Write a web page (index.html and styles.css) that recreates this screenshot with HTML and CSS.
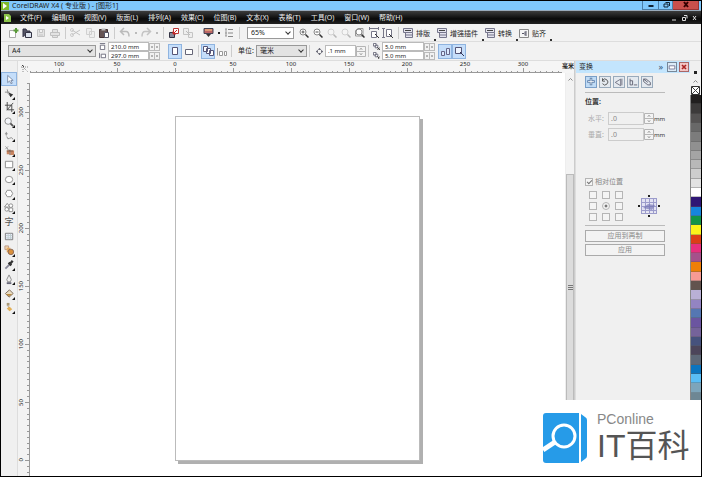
FILE: index.html
```html
<!DOCTYPE html>
<html lang="zh-CN">
<head>
<meta charset="utf-8">
<title>CorelDRAW X4</title>
<link rel="stylesheet" href="styles.css">
</head>
<body>
<svg class="defs" aria-hidden="true">
  <symbol id="ticks-h" viewBox="0 0 58 12"><path d="M.5 10v2M6.5 10v2M12.5 10v2M17.5 10v2M23.5 10v2M29.5 7v5M35.5 10v2M41.5 10v2M46.5 10v2M52.5 10v2M0 11.5h58" stroke="#999" fill="none"/></symbol>
  <symbol id="ticks-v" viewBox="0 0 12 58"><path d="M9 .5h3M9 6.5h3M9 12.5h3M9 17.5h3M9 23.5h3M7 29.5h5M9 35.5h3M9 41.5h3M9 46.5h3M9 52.5h3M11.5 0v58" stroke="#999" fill="none"/></symbol>
  <symbol id="zoom" viewBox="0 0 12 12"><circle cx="5" cy="5" r="3" fill="#fff" stroke="#888"/><path d="M7.5 7.5l3 3" stroke="#333" stroke-width="1.5"/></symbol>
  <symbol id="plugin" viewBox="0 0 12 12"><path d="M1.500 1.500h9v4h-9zM3.500 5.500v5h7v-5M3.500 8h7" fill="#e4e4ee" stroke="#77778c"/><path d="M3 3.500h6" stroke="#444"/></symbol>
  <symbol id="spin" viewBox="0 0 11 8"><path d="M.5 0v8M5.500 0v8M10.500 0v8M0 .5h11M0 7.500h11" stroke="#bbb" fill="none"/><path d="M2 4h2M7 4h2" stroke="#777"/></symbol>
  <symbol id="spin-tall" viewBox="0 0 10 11"><path d="M.5.5h9v10h-9zM.5 5.500h9" stroke="#b5b5b5" fill="#f4f4f4"/><path d="M4 3.500l1-1 1 1M4 7.500l1 1 1-1" stroke="#666" fill="none"/></symbol>
</svg>
<div class="app">
  <header class="titlebar">
    <svg class="logo" viewBox="0 0 8 8"><path d="M0 0h8v8H0z" fill="#7fba2c"/><path d="M2 1l4 3-4 3z" fill="#fff"/></svg>
    <h1>CorelDRAW X4 ( 专业版 ) - [图形1]</h1>
    <div class="winbuttons">
      <button aria-label="最小化"><svg viewBox="0 0 12 8"><path d="M3.500 5h5" stroke="#123" stroke-width="2"/></svg></button>
      <button aria-label="还原"><svg viewBox="0 0 12 8"><path d="M4 3h4v3H4zM5.500 1.500H9.500V5" fill="none" stroke="#123"/></svg></button>
      <button class="close" aria-label="关闭"><svg viewBox="0 0 12 8"><path d="M4 1l4 5M8 1L4 6" stroke="#300" stroke-width="2"/></svg></button>
    </div>
  </header>
  <nav class="menubar">
    <svg class="logo" viewBox="0 0 8 8"><path d="M1 0h5l2 2v6H1z" fill="#8bc34a"/><path d="M3 2l3 2-3 2z" fill="#fff"/></svg>
    <ul>
      <li><a href="#">文件(F)</a></li><li><a href="#">编辑(E)</a></li><li><a href="#">视图(V)</a></li><li><a href="#">版面(L)</a></li><li><a href="#">排列(A)</a></li><li><a href="#">效果(C)</a></li><li><a href="#">位图(B)</a></li><li><a href="#">文本(X)</a></li><li><a href="#">表格(T)</a></li><li><a href="#">工具(O)</a></li><li><a href="#">窗口(W)</a></li><li><a href="#">帮助(H)</a></li>
    </ul>
    <svg class="docbuttons" viewBox="0 0 28 8"><path d="M2 6h4M12.500 3.500h3v3h-3zM14 1.500h3v3M23 2l3 4M26 2l-3 4" fill="none" stroke="#ddd"/></svg>
  </nav>

  <div class="toolbar">
    <button class="ic" aria-label="新建"><svg viewBox="0 0 12 12"><path d="M2.500 3.500h6v7h-6z" fill="#fff" stroke="#aaa"/><path d="M9 1v5M6.500 3.500h5" stroke="#5a9a3a" stroke-width="2"/></svg></button>
    <button class="ic" aria-label="打开"><svg viewBox="0 0 12 12"><path d="M2 10V2h3l1 2h3v2" fill="#556" stroke="#334"/><path d="M4.500 5.500h6v5h-6z" fill="#dde3ee" stroke="#334"/></svg></button>
    <button class="ic" aria-label="保存"><svg viewBox="0 0 12 12"><path d="M2.500 2.500h7v7h-7zM4.500 2.500v3h3v-3M4 8h4" fill="#e3e3e3" stroke="#c4c4c4"/></svg></button>
    <button class="ic" aria-label="打印"><svg viewBox="0 0 12 12"><path d="M1.500 5.500h9v3h-9zM3.500 5V2.500h5V5M3.500 9v1.500h5V9" fill="#e3e3e3" stroke="#c0c0c0"/></svg></button>
    <i class="sep"></i>
    <button class="ic" aria-label="剪切"><svg viewBox="0 0 12 12"><path d="M2 3l8 5M2 8l8-5" stroke="#c4c4c4"/><circle cx="2" cy="3" r="1.500" fill="none" stroke="#ccc"/><circle cx="2" cy="8" r="1.500" fill="none" stroke="#ccc"/></svg></button>
    <button class="ic" aria-label="复制"><svg viewBox="0 0 12 12"><path d="M2.500 1.500h5v6h-5zM5.500 4.500h5v6h-5z" fill="#eee" stroke="#d0d0d0"/></svg></button>
    <button class="ic" aria-label="粘贴"><svg viewBox="0 0 12 12"><path d="M1.500 2.500h8v8h-8z" fill="#655" stroke="#433"/><path d="M3.500 1.500h4v2h-4z" fill="#bbb"/><path d="M6.500 5.500h4v5h-4z" fill="#fff" stroke="#556"/></svg></button>
    <i class="sep"></i>
    <button class="ic" aria-label="撤消"><svg viewBox="0 0 12 12"><path d="M5 1L1.500 4.500 5 8M2 4.500h5q3 0 3 5" fill="none" stroke="#bbb" stroke-width="1.500"/></svg></button><i class="dot muted"></i>
    <button class="ic" aria-label="重做"><svg viewBox="0 0 12 12"><path d="M7 1l3.500 3.500L7 8M10 4.500H5q-3 0-3 5" fill="none" stroke="#c4c4c4" stroke-width="1.500"/></svg></button><i class="dot muted"></i>
    <i class="sep"></i>
    <button class="ic" aria-label="导入"><svg viewBox="0 0 12 12"><path d="M1.500 5.500h5v5h-5z" fill="#889" stroke="#334"/><path d="M5.500 1.500h5v5h-5z" fill="#fff" stroke="#b33"/><path d="M9 3L5 7M5 4.500V7h3" stroke="#c22" fill="none"/></svg></button>
    <button class="ic" aria-label="导出"><svg viewBox="0 0 12 12"><path d="M1.500 1.500h5v6h-5zM6.500 5.500h4v5h-4z" fill="#eee" stroke="#c4c4c4"/><path d="M4 4l4 4" stroke="#bbb"/></svg></button>
    <i class="gap"></i>
    <button class="ic" aria-label="启动器"><svg viewBox="0 0 12 12"><path d="M2 1.500h9v5H2z" fill="#b66" stroke="#445"/><path d="M3 3h7" stroke="#fc8"/><path d="M4 7h5L6.500 10z" fill="#333"/></svg></button><i class="dot"></i>
    <button class="ic" aria-label="选项"><svg viewBox="0 0 12 12"><path d="M5 2.500h5M5 6h5M5 9.500h5" stroke="#888"/><path d="M2 2h2M2 6h2M2 9h2M3 2v7" stroke="#999"/></svg></button>
    <i class="sep"></i>
    <label class="combo zoombox"><select aria-label="缩放级别"><option>65%</option></select></label>
    <button class="ic" aria-label="放大"><svg viewBox="0 0 12 12"><use href="#zoom"/><path d="M3.500 5h3M5 3.500v3" stroke="#555"/></svg></button>
    <button class="ic" aria-label="缩小"><svg viewBox="0 0 12 12"><use href="#zoom"/><path d="M3.500 5h3" stroke="#555"/></svg></button>
    <button class="ic off" aria-label="缩放选定范围"><svg viewBox="0 0 12 12"><use href="#zoom"/></svg></button>
    <button class="ic off" aria-label="缩放全部对象"><svg viewBox="0 0 12 12"><use href="#zoom"/></svg></button>
    <button class="ic" aria-label="显示页面"><svg viewBox="0 0 12 12"><path d="M1.500 9V3.500L4 1.500h5V9z" fill="#fff" stroke="#999"/><use href="#zoom"/></svg></button>
    <button class="ic" aria-label="按页宽显示"><svg viewBox="0 0 12 12"><path d="M1 1.500h10M1.500 0v3M10.500 0v3M3.500 4.500h5v6h-5z" fill="#fff" stroke="#778"/><path d="M7 7l4 4" stroke="#333"/></svg></button>
    <button class="ic" aria-label="按页高显示"><svg viewBox="0 0 12 12"><path d="M1.500 1v10M0 1.500h3M0 10.500h3M4.500 2.500h5v7h-5z" fill="#fff" stroke="#778"/><path d="M7 7l4 4" stroke="#333"/></svg></button>
    <i class="sep"></i>
    <button class="plug"><svg viewBox="0 0 12 12"><use href="#plugin"/></svg>排版</button>
    <button class="plug"><svg viewBox="0 0 12 12"><use href="#plugin"/></svg>增强插件</button>
    <button class="plug"><svg viewBox="0 0 12 12"><use href="#plugin"/></svg>转换</button>
    <button class="plug"><svg viewBox="0 0 12 12"><path d="M1.500 2.500h9v8h-9z" fill="#f6f6f6" stroke="#888"/><path d="M8 4v5M7 4.500v4M4 6.500h2" stroke="#556" fill="none"/></svg>贴齐</button>
  </div>

  <div class="toolbar props">
    <label class="combo paper"><select aria-label="纸张类型"><option>A4</option></select></label>
    <div class="pair size">
      <label class="num"><svg viewBox="0 0 8 8"><path d="M1.500 2.500h5v5h-5zM1 .5h6" fill="#fff" stroke="#667"/></svg><input value="210.0 mm" aria-label="页宽"><svg class="spin"><use href="#spin"/></svg></label>
      <label class="num"><svg viewBox="0 0 8 8"><path d="M.5 1v6M2.500 2.500h5v4h-5z" fill="#fff" stroke="#667"/></svg><input value="297.0 mm" aria-label="页高"><svg class="spin"><use href="#spin"/></svg></label>
    </div>
    <div class="group">
      <button class="tog on" aria-label="纵向"><svg viewBox="0 0 12 12"><path d="M3.500 2.500h5v7h-5z" fill="#fff" stroke="#557"/></svg></button>
      <button class="tog" aria-label="横向"><svg viewBox="0 0 12 12"><path d="M2.500 4.500h7v5h-7z" fill="#fff" stroke="#667"/></svg></button>
    </div>
    <i class="sep"></i>
    <div class="group">
      <button class="tog on" aria-label="所有页面"><svg viewBox="0 0 12 12"><path d="M1.500 1.500h4v5h-4zM4.500 3.500h4v5h-4zM7.500 5.500h4v5h-4z" fill="#fff" stroke="#557"/></svg></button>
      <button class="tog" aria-label="当前页面"><svg viewBox="0 0 12 12"><path d="M1.500 3v7.500M3.500 6.500h3v4h-3zM8.500 6.500h2v4h-2z" fill="#fff" stroke="#999"/></svg></button>
    </div>
    <i class="sep"></i>
    <label class="unit">单位: <span class="combo"><select><option>毫米</option></select></span></label>
    <i class="sep"></i>
    <label class="num nudge"><svg viewBox="0 0 8 8"><path d="M4 0l2 2H2zM4 8l2-2H2zM0 4l2-2v4zM8 4L6 2v4z" fill="#445"/></svg><input value=".1 mm" aria-label="微调偏移"><svg class="spin-tall"><use href="#spin-tall"/></svg></label>
    <i class="sep"></i>
    <div class="pair dup">
      <label class="num"><svg viewBox="0 0 8 8"><path d="M.5.500h3v3h-3zM2.500 2.500h3v3h-3z" fill="#fff" stroke="#667"/><path d="M5 5l3 3M8 5L5 8" stroke="#333"/></svg><input value="5.0 mm" aria-label="再制距离 X"><svg class="spin"><use href="#spin"/></svg></label>
      <label class="num"><svg viewBox="0 0 8 8"><path d="M.5.500h3v3h-3zM2.500 2.500h3v3h-3z" fill="#fff" stroke="#667"/><path d="M5 5l1.500 1.500L8 5M6.500 6v2" stroke="#333" fill="none"/></svg><input value="5.0 mm" aria-label="再制距离 Y"><svg class="spin"><use href="#spin"/></svg></label>
    </div>
    <div class="group">
      <button class="tog on" aria-label="绘制时显示"><svg viewBox="0 0 12 12"><path d="M2.500 6.500h3v4h-3zM7.500 3.500h3v6h-3z" fill="#dceaff" stroke="#668"/></svg></button>
      <button class="tog on" aria-label="移动时显示"><svg viewBox="0 0 12 12"><path d="M2.500 2.500h6v6h-6z" fill="#eef5ff" stroke="#557"/><path d="M7 7l4 4" stroke="#335"/></svg></button>
    </div>
  </div>

  <div class="work">
    <ul class="toolbox">
      <li><button class="on" aria-label="挑选"><svg viewBox="0 0 12 12"><path d="M4 1.500v8l2-2 1.500 3L9 10 7.500 7h2.500z" fill="#fff" stroke="#7a8aa5"/></svg></button></li>
      <li class="fly"><button aria-label="形状"><svg viewBox="0 0 12 12"><path d="M1 4.500h5M3.500 1.500q0 5 4 8" stroke="#888" fill="none"/><path d="M5 5l5 2-3 3z" fill="#333"/></svg></button></li>
      <li class="fly"><button aria-label="裁剪"><svg viewBox="0 0 12 12"><path d="M3.500 0v8.500H11M1 3.500h7.500V11M10 1L3 9" stroke="#444" fill="none"/></svg></button></li>
      <li class="fly"><button aria-label="缩放"><svg viewBox="0 0 12 12"><circle cx="4.500" cy="4.500" r="3.500" fill="#f4f6fa" stroke="#888"/><path d="M7 7l3 3" stroke="#555" stroke-width="2"/></svg></button></li>
      <li class="fly"><button aria-label="手绘"><svg viewBox="0 0 12 12"><path d="M2.500 1v4M1 3h3M3 6q1 4 3 2t4 1" stroke="#888" fill="none"/></svg></button></li>
      <li class="fly"><button aria-label="智能填充"><svg viewBox="0 0 12 12"><path d="M1.500 1.500l3 3M4.500 1.500l-3 3M3 4l4 3" stroke="#999" fill="none"/><path d="M3 6h3v4H3zM7 6h4v5H7z" fill="#c98560"/><path d="M3 6.500h7M6.500 5v6" stroke="#754"/></svg></button></li>
      <li class="fly"><button aria-label="矩形"><svg viewBox="0 0 12 12"><path d="M1.500 2.500h8v7h-8z" fill="#fff" stroke="#888"/></svg></button></li>
      <li class="fly"><button aria-label="椭圆形"><svg viewBox="0 0 12 12"><ellipse cx="5.500" cy="6" rx="4" ry="3.500" fill="#fff" stroke="#888"/></svg></button></li>
      <li class="fly"><button aria-label="多边形"><svg viewBox="0 0 12 12"><path d="M3.500 2.500h4l2 3.500-2 3.500h-4L1.500 6z" fill="#fff" stroke="#888"/></svg></button></li>
      <li class="fly"><button aria-label="基本形状"><svg viewBox="0 0 12 12"><path d="M3.500 1.500l3 4h-6zM5.500 6.500h4v4h-4z" fill="#fff" stroke="#888"/><circle cx="7.500" cy="4" r="2" fill="#fff" stroke="#888"/><circle cx="3" cy="8" r="2" fill="#fff" stroke="#888"/></svg></button></li>
      <li><button class="glyph" aria-label="文本">字</button></li>
      <li><button aria-label="表格"><svg viewBox="0 0 12 12"><path d="M1.500 2.500h8v7h-8z" fill="#eef" stroke="#777"/><path d="M4.500 3v6M7 3v6M2 5h7M2 7.500h7" stroke="#bcc"/></svg></button></li>
      <li class="fly"><button aria-label="交互式调和"><svg viewBox="0 0 12 12"><path d="M1 1h4v4H1z" fill="#efd4ae" stroke="#b98"/><path d="M3 3h4v5H3z" fill="#e4aa60"/><circle cx="7.500" cy="7.500" r="3" fill="#d9903c" stroke="#865"/></svg></button></li>
      <li class="fly"><button aria-label="滴管"><svg viewBox="0 0 12 12"><path d="M1.500 10.500l5-5" stroke="#889" stroke-width="2"/><path d="M5 4l3 3M6.500 5.500l3-3.500" stroke="#333" stroke-width="2.500"/></svg></button></li>
      <li class="fly"><button aria-label="轮廓"><svg viewBox="0 0 12 12"><path d="M5.500 1L3 6l1 2.500h3L8 6z" fill="#eee" stroke="#888"/><path d="M3 10h5" stroke="#667" stroke-width="2"/></svg></button></li>
      <li class="fly"><button aria-label="填充"><svg viewBox="0 0 12 12"><path d="M1.500 6L6 2l4 4-4.500 4z" fill="#e9dcc0" stroke="#765"/><path d="M2 6.500h7L5.500 9z" fill="#b98a40"/></svg></button></li>
      <li class="fly"><button aria-label="交互式填充"><svg viewBox="0 0 12 12"><path d="M4 4l2 3" stroke="#a98"/><path d="M3 1h3v3H3z" fill="#a97"/><path d="M3 7l3-2 3 3-3 2z" fill="#e2ae55"/></svg></button></li>
    </ul>
    <div class="drawing">
      <div class="ruler-h">
        <svg class="origin" viewBox="0 0 12 12"><path d="M5 4v8M3 6h8M6 7l4 4" stroke="#888" stroke-dasharray="1 1"/><path d="M4 4l2 2" stroke="#444"/></svg>
        <ol>
          <li><svg><use href="#ticks-h"/></svg><span>100</span></li><li><svg><use href="#ticks-h"/></svg><span>50</span></li><li><svg><use href="#ticks-h"/></svg><span>0</span></li><li><svg><use href="#ticks-h"/></svg><span>50</span></li><li><svg><use href="#ticks-h"/></svg><span>100</span></li><li><svg><use href="#ticks-h"/></svg><span>150</span></li><li><svg><use href="#ticks-h"/></svg><span>200</span></li><li><svg><use href="#ticks-h"/></svg><span>250</span></li><li><svg><use href="#ticks-h"/></svg><span>300</span></li><li><svg><use href="#ticks-h"/></svg></li>
        </ol>
        <b>毫米</b>
      </div>
      <div class="ruler-v">
        <ol>
          <li><svg><use href="#ticks-v"/></svg><span>300</span></li><li><svg><use href="#ticks-v"/></svg><span>250</span></li><li><svg><use href="#ticks-v"/></svg><span>200</span></li><li><svg><use href="#ticks-v"/></svg><span>150</span></li><li><svg><use href="#ticks-v"/></svg><span>100</span></li><li><svg><use href="#ticks-v"/></svg><span>50</span></li><li><svg><use href="#ticks-v"/></svg><span>0</span></li>
        </ol>
      </div>
      <main class="canvas"><div class="page"></div></main>
      <div class="scroll">
        <svg class="up" viewBox="0 0 9 6"><path d="M2.500 4.500l2-2 2 2" stroke="#888" fill="none"/></svg>
        <div class="thumb"><svg viewBox="0 0 5 6"><path d="M0 .5h5M0 2.500h5M0 4.500h5" stroke="#777"/></svg></div>
      </div>
    </div>
    <aside class="docker">
      <header><h2>变换</h2><span>»</span>
        <button aria-label="折叠"><svg viewBox="0 0 10 10"><path d="M1.500 3.500h7v4h-7z" fill="#fff" stroke="#668"/></svg></button>
        <button class="x" aria-label="关闭泊坞窗"><svg viewBox="0 0 10 10"><path d="M2.500 2.500l5 5M7.500 2.500l-5 5" stroke="#a22" stroke-width="2"/></svg></button>
      </header>
      <div class="panel">
        <div class="modes">
          <button class="on" aria-label="位置"><svg viewBox="0 0 12 12"><path d="M6 1v9M1.500 5.500h9" stroke="#5a7ba5" stroke-width="3"/><path d="M6 2v7M2.500 5.500h7" stroke="#fff"/></svg></button>
          <button aria-label="旋转"><svg viewBox="0 0 12 12"><path d="M3 4a3.500 3.500 0 1 1 0 4M3 1.500V5h3" fill="none" stroke="#444"/></svg></button>
          <button aria-label="缩放和镜像"><svg viewBox="0 0 12 12"><path d="M1.500 6.500L8 2.500v8zM9.500 2v8" fill="none" stroke="#667"/></svg></button>
          <button aria-label="大小"><svg viewBox="0 0 12 12"><path d="M2.500 2v7.500h3v-5h-3M7 9.500h4" fill="none" stroke="#556"/></svg></button>
          <button aria-label="倾斜"><svg viewBox="0 0 12 12"><path d="M2 2.500h3l5 4v3H7l-5-4zM2 2.500l5 4" fill="none" stroke="#556"/></svg></button>
        </div>
        <hr>
        <h3>位置:</h3>
        <div class="field"><label for="hx">水平:</label><input id="hx" value=".0"><svg class="spin-tall"><use href="#spin-tall"/></svg><span>mm</span></div>
        <div class="field"><label for="vy">垂直:</label><input id="vy" value=".0"><svg class="spin-tall"><use href="#spin-tall"/></svg><span>mm</span></div>
        <label class="relative"><input type="checkbox" checked>相对位置</label>
        <div class="anchor">
          <div class="cells">
            <input type="checkbox" aria-label="左上"><input type="checkbox" aria-label="上"><input type="checkbox" aria-label="右上">
            <input type="checkbox" aria-label="左"><input type="radio" checked aria-label="中心"><input type="checkbox" aria-label="右">
            <input type="checkbox" aria-label="左下"><input type="checkbox" aria-label="下"><input type="checkbox" aria-label="右下">
          </div>
          <svg class="mesh" viewBox="0 0 22 22"><path d="M3.500 3.500h15v14h-15z" fill="#e2e2f3"/><path d="M3 3.500h16M3 7.500h16M3 11.500h16M3 15.500h16M3 18.500h16M3.500 3v16M7.500 3v16M11.500 3v16M15.500 3v16M18.500 3v16" stroke="#9c9ccb"/><path d="M5 13l5-4 7 1-3 5z" fill="#7777b5" opacity=".7"/><path d="M10 0h2v2h-2zM10 20h2v2h-2zM0 10h2v2H0zM20 10h2v2h-2z" fill="#222"/></svg>
        </div>
        <hr>
        <button class="apply">应用到再制</button>
        <button class="apply">应用</button>
      </div>
    </aside>
    <div class="palette">
      <svg class="head" viewBox="0 0 11 34"><path d="M4 10h3v3H4z" fill="#222"/><path d="M3.500 21.500l2-2 2 2" stroke="#888" fill="none"/><path d="M1.500 25.500h8v8h-8z" fill="#fff" stroke="#333"/><path d="M2 26l7 7M9 26l-7 7" stroke="#444"/></svg>
      <ul>
        <li class="c1"></li><li class="c2"></li><li class="c3"></li><li class="c4"></li><li class="c5"></li><li class="c6"></li><li class="c7"></li><li class="c8"></li><li class="c9"></li><li class="c10"></li><li class="c11"></li><li class="c12"></li><li class="c13"></li><li class="c14"></li><li class="c15"></li><li class="c16"></li><li class="c17"></li><li class="c18"></li><li class="c19"></li><li class="c20"></li><li class="c21"></li><li class="c22"></li><li class="c23"></li><li class="c24"></li><li class="c25"></li><li class="c26"></li><li class="c27"></li><li class="c28"></li><li class="c29"></li><li class="c30"></li><li class="c31"></li><li class="c32"></li><li class="c33"></li>
      </ul>
    </div>
  </div>
  <div class="brand">
    <svg viewBox="0 0 44 52"><path d="M3 1h33v50H3q-3 0-3-3V4q0-3 3-3z" fill="#269be8"/><path d="M38 2l4 3q2 1 2 3v36q0 2-2 3l-4 3z" fill="#269be8"/><path d="M0 38l12-8" stroke="#fff" stroke-width="5"/><circle cx="21" cy="24" r="11" fill="#269be8" stroke="#fff" stroke-width="3"/></svg>
    <div><small>PConline</small><strong>IT百科</strong></div>
  </div>
</div>
</body>
</html>
```
FILE: styles.css
```css
* { box-sizing: border-box; }
body { margin: 0; font: 7px/10px "Noto Sans", "Noto Sans CJK SC", sans-serif; color: #222; }
h1, h2, h3, ul, ol { margin: 0; padding: 0; font-size: inherit; list-style: none; }
button, input, select { font: inherit; color: inherit; margin: 0; padding: 0; border: 0; background: none; border-radius: 0; min-width: 0; }
svg { display: block; flex: none; }
a { color: inherit; text-decoration: none; }
.defs { position: absolute; width: 0; height: 0; }

.app { position: relative; display: flex; flex-direction: column; height: 100vh; border: 1px solid #000; overflow: hidden; background: #f0f0f0; }

.titlebar { display: flex; align-items: center; height: 9px; background: #7fc8fc; }
.logo { width: 8px; height: 8px; margin: 0 3px 0 0; }
.titlebar h1 { flex: 1; font-weight: 400; font-size: 7px; line-height: 9px; white-space: pre; }
.winbuttons { display: flex; height: 9px; margin-right: 2px; }
.winbuttons button { width: 17px; border: 1px solid #4c7fa8; border-top: 0; display: flex; justify-content: center; }
.winbuttons button + button { border-left: 0; width: 14px; }
.winbuttons button.close { width: 26px; background: #c9504c; border-color: #933; }
.winbuttons svg { width: 12px; height: 8px; }

.menubar { display: flex; align-items: center; height: 14px; padding: 0 3px 0 2px; color: #eee; border-top: 1px solid #9ab; background: linear-gradient(#3c3c3c, #0a0a0a 60%, #222); }
.menubar ul { flex: 1; display: flex; gap: 10px; padding-left: 6px; }
.menubar li { white-space: nowrap; }
.docbuttons { width: 28px; height: 8px; }

.toolbar { display: flex; align-items: center; height: 17px; padding-left: 5px; background: #f2f2f2; }
.ic { width: 14px; height: 14px; padding: 1px; flex: none; }
.ic svg { width: 12px; height: 12px; }
.off { opacity: .3; }
.sep { width: 1px; height: 12px; margin: 0 3px; background: #ccc; flex: none; }
.gap { width: 6px; }
.dot { width: 2px; height: 2px; margin: 0 2px 0 3px; background: #222; flex: none; }
.muted { background: #bbb; }
.plug { display: flex; align-items: center; position: relative; padding-right: 6px; font-family: "Noto Sans CJK SC", sans-serif; white-space: nowrap; }
.plug svg { width: 12px; height: 12px; margin-right: 2px; }
.plug::after { content: ""; position: absolute; right: 0; bottom: -2px; border: 1px solid #333; }

.combo { position: relative; display: block; flex: none; }
.combo select { display: block; appearance: none; width: 100%; height: 12px; padding: 0 3px; border: 1px solid #999; background: #fff; line-height: 10px; }
.combo::after { content: ""; position: absolute; right: 4px; top: 3px; width: 3px; height: 3px; border: solid #333; border-width: 0 1px 1px 0; transform: rotate(45deg); }
.zoombox { width: 47px; margin: 0 3px 0 4px; }

.props { height: 20px; padding-left: 7px; border-top: 1px solid #ddd; border-bottom: 1px solid #ddd; }
.props .sep { margin: 0 2px; }
.paper { width: 88px; }
.props .combo select { background: #e3e3e3; }
.pair { display: grid; margin-left: 3px; }
.num { display: flex; align-items: center; font-size: 6px; }
.num > svg:first-child { width: 7px; height: 7px; margin-right: 2px; }
.num input { width: 41px; height: 9px; padding: 0 2px; border: 1px solid #bbb; background: #fff; line-height: 7px; }
.spin { width: 11px; height: 8px; }
.spin-tall { width: 10px; height: 11px; }
.group { display: flex; margin-left: 8px; }
.props .sep + .group { margin-left: 0; }
.tog { width: 14px; height: 15px; display: flex; align-items: center; justify-content: center; }
.tog svg { width: 12px; height: 12px; }
.tog.on { background: #c5defa; border: 1px solid #8fb4e0; }
.unit { display: flex; align-items: center; gap: 2px; margin-left: 4px; white-space: nowrap; }
.unit .combo { width: 51px; }
.nudge { margin-left: 4px; }
.nudge input { width: 31px; height: 12px; }
.dup { margin-left: 2px; }
.dup .num input { width: 42px; }
.dup + .group { margin-left: 3px; }

.work { flex: 1; display: flex; min-height: 0; }
.toolbox { width: 16px; height: 254px; padding-top: 11px; display: grid; grid-auto-rows: 1fr; flex: none; }
.toolbox li { position: relative; display: grid; }
.toolbox button { display: grid; place-items: center; }
.toolbox button.on { background: #c5defa; border: 1px solid #8fb4e0; }
.toolbox svg { width: 11px; height: 11px; }
.toolbox .fly::after { content: ""; position: absolute; right: 2px; bottom: 1px; border: solid transparent; border-width: 0 0 3px 3px; border-bottom-color: #111; }
.glyph { font: 9px/10px "Noto Sans CJK SC", sans-serif; color: #555; }

.drawing { flex: 1; min-width: 0; display: grid; grid-template: 12px 1fr / 12px 1fr 9px; border-left: 1px solid #ddd; border-right: 1px solid #ccc; }
.ruler-h { grid-column: 1 / 4; display: flex; font-size: 6px; line-height: 7px; overflow: hidden; background: #f5f5f5; }
.origin { width: 12px; height: 12px; }
.ruler-h ol { flex: 1; min-width: 0; overflow: hidden; display: flex; }
.ruler-h li { display: grid; width: 58px; flex: none; }
.ruler-h li > *, .ruler-v li > * { grid-area: 1 / 1; }
.ruler-h li svg { width: 58px; height: 12px; }
.ruler-h li span { justify-self: center; }
.ruler-h b { font-size: 6px; line-height: 11px; white-space: nowrap; }
.ruler-v { overflow: hidden; background: #f3f3f3; }
.ruler-v ol { padding-top: 10px; }
.ruler-v li { display: grid; height: 58px; font-size: 6px; line-height: 7px; }
.ruler-v li svg { width: 12px; height: 58px; }
.ruler-v li span { writing-mode: vertical-rl; transform: rotate(180deg); place-self: center start; }
.canvas { background: #fff; overflow: hidden; }
.page { width: 245px; height: 345px; margin: 43px 0 0 145px; border: 1px solid #bbb; background: #fff; box-shadow: 3px 3px 0 #b0b0b0; }
.scroll { display: flex; flex-direction: column; background: #f3f3f3; border-left: 1px solid #eee; }
.scroll .up { width: 9px; height: 6px; margin: 3px 0 92px; }
.thumb { flex: 1; background: #dcdcdc; border: 1px solid #bbb; border-bottom: 0; padding: 110px 1px 0; }
.thumb svg { width: 5px; height: 6px; }

.docker { width: 115px; flex: none; border-left: 1px solid #ddd; }
.docker header { display: flex; align-items: center; gap: 2px; height: 12px; padding: 0 1px 0 3px; background: #c3e5fd; }
.docker h2 { flex: 1; font-weight: 400; }
.docker header span { font-size: 9px; color: #357; margin-right: 2px; }
.docker header button { width: 10px; height: 10px; border: 1px solid #789; background: #dcebf7; }
.docker header .x { background: #f3c6c6; border-color: #a66; }
.docker header svg { width: 8px; height: 8px; }
.panel { width: 87px; padding: 3px 0 0 9px; color: #888; display: grid; }
.modes { display: flex; gap: 2px; }
.modes button { width: 12px; height: 12px; border: 1px solid #9ab; background: #e4e9ef; }
.modes svg { width: 10px; height: 10px; }
.modes .on { background: #c0dbf5; border-color: #7a9fc8; }
hr { width: 100%; height: 1px; margin: 4px 0; border: 0; background: #bbb; }
h3 { color: #333; font-weight: 700; margin: 0 0 5px; }
.field { display: flex; align-items: center; height: 13px; margin-bottom: 3px; color: #aaa; }
.field label { width: 20px; flex: none; margin-left: 3px; }
.field input { width: 36px; height: 13px; flex: none; border: 1px solid #ccc; padding: 0 2px; color: #888; }
.field span { color: #333; font-size: 6px; }
.relative { display: flex; align-items: center; gap: 2px; margin: 33px 0 4px; }
input[type="checkbox"], input[type="radio"] { appearance: none; width: 8px; height: 8px; border: 1px solid #b5b5b5; background: #f4f4f4; }
.relative input { position: relative; }
.relative input::after { content: ""; position: absolute; left: 2px; top: 0; width: 2px; height: 4px; border: solid #777; border-width: 0 1px 1px 0; transform: rotate(45deg); }
input[type="radio"] { border-radius: 50%; background: radial-gradient(#777 30%, #f4f4f4 40%); }
.anchor { display: flex; align-items: center; gap: 15px; padding-left: 4px; }
.cells { display: grid; grid-template-columns: repeat(3, 8px); gap: 3px 5px; }
.mesh { width: 22px; height: 22px; }
.apply { height: 12px; margin-bottom: 2px; border: 1px solid #aaa; background: #f3f3f3; line-height: 10px; }

.palette { width: 11px; flex: none; }
.palette .head { width: 11px; height: 34px; }
.palette ul { display: grid; grid-auto-rows: 1fr; height: 307px; border-left: 1px solid #888; }
.palette li { border-bottom: 1px solid rgba(90, 90, 90, .35); }
.c1 { background: #211f1f; } .c2 { background: #3c3a3a; } .c3 { background: #545252; }
.c4 { background: #686868; } .c5 { background: #7c7c7c; } .c6 { background: #909090; }
.c7 { background: #a4a4a4; } .c8 { background: #b8b8b8; } .c9 { background: #cdcdcd; }
.c10 { background: #e2e2e2; } .c11 { background: #fff; } .c12 { background: #2f1675; }
.c13 { background: #1685dd; } .c14 { background: #129447; } .c15 { background: #fbf31a; }
.c16 { background: #dd3d17; } .c17 { background: #e72f7e; } .c18 { background: #a5518b; }
.c19 { background: #ee7f08; } .c20 { background: #f79a94; } .c21 { background: #62534e; }
.c22 { background: #b9b0d6; } .c23 { background: #9384c2; } .c24 { background: #5577b2; }
.c25 { background: #6b55a0; } .c26 { background: #75639a; } .c27 { background: #46527d; }
.c28 { background: #4c455a; } .c29 { background: #5d6877; } .c30 { background: #0b74be; }
.c31 { background: #5abdf5; } .c32 { background: #7da5bb; } .c33 { background: #6e8794; }

.brand { position: absolute; right: 0; bottom: 0; width: 136px; height: 76px; background: #fff; display: flex; align-items: center; }
.brand svg { width: 44px; height: 52px; margin-left: -22px; }
.brand div { margin-left: 10px; display: grid; color: #555; }
.brand small { font: 14px/16px "Liberation Sans", sans-serif; color: #888; }
.brand strong { font: 400 32px/38px "Liberation Sans", "Noto Sans CJK SC", sans-serif; white-space: nowrap; }
```
